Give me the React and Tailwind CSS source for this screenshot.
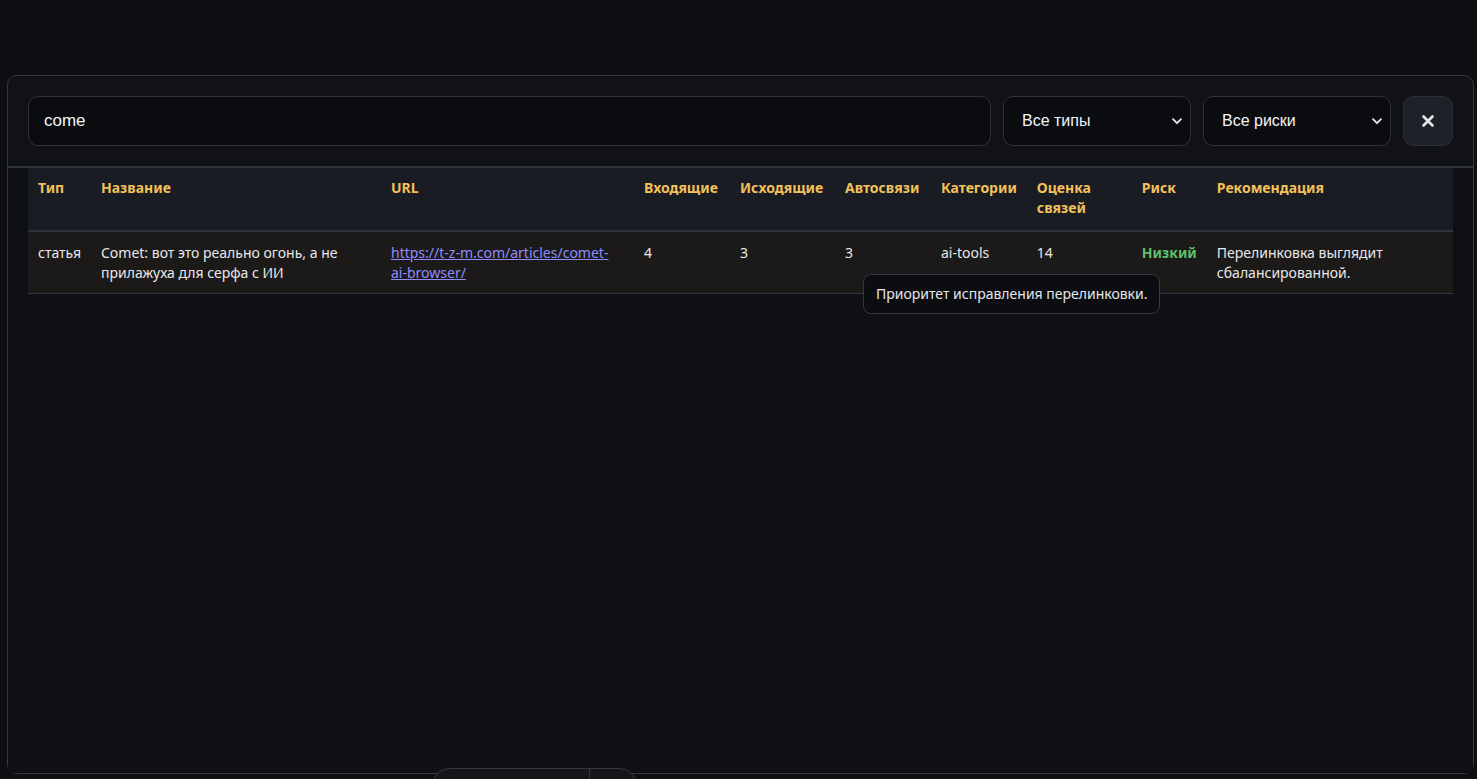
import React from "react";

const columns = [
  { key: "type", label: "Тип", w: "w-[62px]" },
  { key: "title", label: "Название", w: "w-[290px]" },
  { key: "url", label: "URL", w: "w-[253px]" },
  { key: "in", label: "Входящие", w: "w-[96px]" },
  { key: "out", label: "Исходящие", w: "w-[105px]" },
  { key: "auto", label: "Автосвязи", w: "w-[96px]" },
  { key: "cat", label: "Категории", w: "w-[95px]" },
  { key: "score", label: "Оценка связей", w: "w-[105px]" },
  { key: "risk", label: "Риск", w: "w-[75px]" },
  { key: "rec", label: "Рекомендация", w: "" },
];

const rows = [
  {
    type: "статья",
    title: "Comet: вот это реально огонь, а не прилажуха для серфа с ИИ",
    url: "https://t-z-m.com/articles/comet-ai-browser/",
    in: 4,
    out: 3,
    auto: 3,
    cat: "ai-tools",
    score: 14,
    risk: "Низкий",
    rec: "Перелинковка выглядит сбалансированной.",
  },
];

const Chevron = () => (
  <svg width="14" height="14" viewBox="0 0 14 14" fill="none" className="shrink-0">
    <path d="M3 5.2 7 9.2l4-4" stroke="#e5e7eb" strokeWidth="1.8" strokeLinecap="round" strokeLinejoin="round" />
  </svg>
);

const App = () => {
  return (
    <div className="h-[779px] w-full bg-[#0e0f13] pt-[75px] pl-[7px] pr-[3px] pb-[5px] overflow-hidden font-['Noto_Sans',sans-serif]">
      <div className="relative h-full rounded-[10px] border border-[#353841] bg-[#111217] flex flex-col">
        <div className="flex items-center gap-[12px] px-[20px] pt-[20px] pb-[20px] font-['Liberation_Sans',Arial,sans-serif]">
          <div className="flex-1 h-[50px] rounded-[10px] border border-[#2f323a] bg-[#0b0c10] flex items-center px-[15px] text-[17px] text-[#f3f4f6]">
            come
          </div>
          <div className="w-[188px] h-[50px] rounded-[10px] border border-[#2f323a] bg-[#0b0c10] flex items-center justify-between pl-[18px] pr-[6px] text-[16px] text-[#f3f4f6]">
            <span>Все типы</span>
            <Chevron />
          </div>
          <div className="w-[188px] h-[50px] rounded-[10px] border border-[#2f323a] bg-[#0b0c10] flex items-center justify-between pl-[18px] pr-[6px] text-[16px] text-[#f3f4f6]">
            <span>Все риски</span>
            <Chevron />
          </div>
          <button className="w-[50px] h-[50px] rounded-[10px] border border-[#2b2e36] bg-[#1e2128] flex items-center justify-center">
            <svg width="14" height="14" viewBox="0 0 14 14">
              <path d="M2.5 2.5l9 9M11.5 2.5l-9 9" stroke="#e5e7eb" strokeWidth="2.6" strokeLinecap="round" />
            </svg>
          </button>
        </div>
        <div className="border-t-2 border-[#2e323b] flex-1 bg-[#0f1014] px-[20px]">
          <table className="w-full border-collapse text-[14px] leading-[20px]">
            <thead>
              <tr className="bg-[#191c22] border-b-2 border-[#2e323b]">
                {columns.map((c) => (
                  <th
                    key={c.key}
                    className={`${c.w} text-left align-top font-bold text-[#f2c15a] px-[10px] pt-[10px] pb-[12px]`}
                  >
                    {c.key === "score" ? (
                      <>
                        Оценка
                        <br />
                        связей
                      </>
                    ) : (
                      c.label
                    )}
                  </th>
                ))}
              </tr>
            </thead>
            <tbody>
              {rows.map((r) => (
                <tr key={r.url} className="bg-[#1c1a18] border-b border-[#34373f] text-[#e8e8ea]">
                  <td className="align-top px-[10px] pt-[11px] pb-[10px]">{r.type}</td>
                  <td className="align-top px-[10px] pt-[11px] pb-[10px]">{r.title}</td>
                  <td className="align-top px-[10px] pt-[11px] pb-[10px]">
                    <a className="text-[#8f8cff] underline">
                      https://t-z-m.com/articles/comet-
                      <br />
                      ai-browser/
                    </a>
                  </td>
                  <td className="align-top px-[10px] pt-[11px] pb-[10px]">{r.in}</td>
                  <td className="align-top px-[10px] pt-[11px] pb-[10px]">{r.out}</td>
                  <td className="align-top px-[10px] pt-[11px] pb-[10px]">{r.auto}</td>
                  <td className="align-top px-[10px] pt-[11px] pb-[10px]">{r.cat}</td>
                  <td className="align-top px-[10px] pt-[11px] pb-[10px]">{r.score}</td>
                  <td className="align-top px-[10px] pt-[11px] pb-[10px] font-bold text-[#5fbf6c]">{r.risk}</td>
                  <td className="align-top px-[10px] pt-[11px] pb-[10px]">{r.rec}</td>
                </tr>
              ))}
            </tbody>
          </table>
        </div>

        <div className="absolute left-[855px] top-[198px] rounded-[8px] border border-[#353841] bg-[#0c0d11] px-[12px] py-[9px] text-[14px] leading-[20px] text-[#e5e7eb] whitespace-nowrap">
          Приоритет исправления перелинковки.
        </div>
      </div>
      <div className="relative">
        <div className="absolute left-[426px] top-[-6px] w-[203px] h-[20px] rounded-t-[16px] border border-[#353841] bg-[#15161b] flex">
          <div className="w-[156px] border-r border-[#353841]" />
        </div>
      </div>
    </div>
  );
};

export default App;
